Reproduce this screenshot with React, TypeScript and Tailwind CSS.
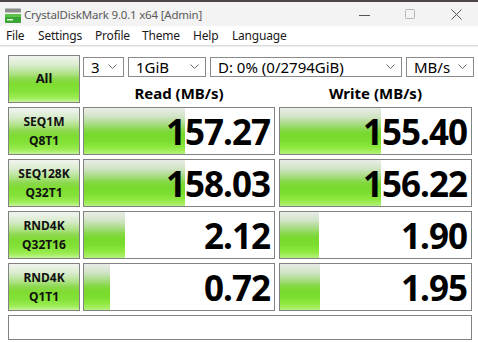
import React from "react";

const barGrad =
  "linear-gradient(to bottom, #e9ece7 0%, #d2e4c8 18%, #a9dc84 35%, #84d944 48%, #78d92c 58%, #7bde2f 72%, #8fe83f 86%, #b4f27c 100%)";
const labelGrad =
  "linear-gradient(to bottom, #f1f4ef 0%, #d9ecce 20%, #b0e288 38%, #8ad94c 50%, #7fdc30 62%, #86e33a 78%, #9bec52 90%, #c3f496 100%)";

function Chevron() {
  return (
    <svg width="9" height="6" viewBox="0 0 9 6" className="shrink-0">
      <polyline points="0.5,0.5 4.5,4.5 8.5,0.5" fill="none" stroke="#6b6b6b" strokeWidth="1" />
    </svg>
  );
}

function Combo({ text, w }: { text: string; w: string }) {
  return (
    <div className={`${w} h-[20px] border border-[#8a8a8a] bg-white flex items-center justify-between pl-[7px] pr-[6px]`}>
      <span className="text-[15px] leading-none text-black">{text}</span>
      <Chevron />
    </div>
  );
}

function LabelBox({ l1, l2 }: { l1: string; l2: string }) {
  return (
    <div
      className="w-[72px] h-[48px] border border-[#828282] flex flex-col items-center justify-center font-bold text-[12px] leading-[19px] text-[#111]"
      style={{ background: labelGrad }}
    >
      <span>{l1}</span>
      <span>{l2}</span>
    </div>
  );
}

function ValueBox({ value, bar, w }: { value: string; bar: number; w: string }) {
  return (
    <div className={`${w} h-[48px] border border-[#828282] bg-white relative overflow-hidden`}>
      <div className="absolute left-0 top-0 bottom-0" style={{ width: bar, background: barGrad }} />
      <div className="relative h-full flex items-center justify-end pr-[4px] text-[35px] font-bold leading-none text-black tracking-[-1px]">
        {value}
      </div>
    </div>
  );
}

const rows = [
  { l1: "SEQ1M", l2: "Q8T1", r: "157.27", rb: 101, w: "155.40", wb: 101 },
  { l1: "SEQ128K", l2: "Q32T1", r: "158.03", rb: 101, w: "156.22", wb: 101 },
  { l1: "RND4K", l2: "Q32T16", r: "2.12", rb: 41, w: "1.90", wb: 39 },
  { l1: "RND4K", l2: "Q1T1", r: "0.72", rb: 26, w: "1.95", wb: 40 },
];

const menu = [
  { t: "File", w: "w-[32px]" },
  { t: "Settings", w: "w-[57px]" },
  { t: "Profile", w: "w-[47px]" },
  { t: "Theme", w: "w-[51px]" },
  { t: "Help", w: "w-[39px]" },
  { t: "Language", w: "w-[60px]" },
];

export default function App() {
  return (
    <div
      className="w-[478px] h-[342px] bg-white overflow-hidden flex flex-col"
      style={{ fontFamily: '"Noto Sans", "Open Sans", sans-serif' }}
    >
      <div className="h-[2px] bg-[#4d4444] shrink-0" />
      {/* Title bar */}
      <div className="h-[24px] bg-[#f3f3f3] flex items-center shrink-0">
        <svg width="18" height="16" viewBox="0 0 18 16" className="ml-[4px] mt-[4px]">
          <rect x="1" y="0.5" width="16" height="4" rx="1" fill="#8c8c8c" />
          <rect x="1" y="6" width="16" height="9" rx="1" fill="#3aa536" />
          <rect x="1" y="6" width="16" height="3" fill="#5cc24a" />
          <rect x="3" y="11" width="6" height="1.5" fill="#dff5d8" />
        </svg>
        <span className="ml-[2px] mt-[2px] text-[11.5px] tracking-[-0.2px] text-[#5a5a5a]">CrystalDiskMark 9.0.1 x64 [Admin]</span>
        <div className="ml-auto flex items-center mt-[1px]">
          <svg width="11" height="10" viewBox="0 0 11 10" className="mr-[35px]">
            <line x1="0" y1="5.5" x2="11" y2="5.5" stroke="#555" strokeWidth="1" />
          </svg>
          <svg width="11" height="11" viewBox="0 0 11 11" className="mr-[35px]">
            <rect x="0.5" y="0.5" width="9" height="9" rx="1" fill="none" stroke="#b8b8b8" strokeWidth="1" />
          </svg>
          <svg width="11" height="11" viewBox="0 0 11 11" className="mr-[16px]">
            <line x1="0.5" y1="0.5" x2="10.5" y2="10.5" stroke="#555" strokeWidth="1" />
            <line x1="10.5" y1="0.5" x2="0.5" y2="10.5" stroke="#555" strokeWidth="1" />
          </svg>
        </div>
      </div>
      {/* Menu bar */}
      <div className="h-[19px] bg-white flex items-center pl-[6px] text-[12px] tracking-[-0.2px] text-[#1a1a1a] shrink-0">
        {menu.map((m) => (
          <span key={m.t} className={m.w}>
            {m.t}
          </span>
        ))}
      </div>
      <div className="h-[1px] bg-[#dadada] shrink-0" />
      <div className="h-[1px] bg-[#f0f0f0] shrink-0" />

      {/* Body */}
      <div className="pl-[8px] pt-[8px] flex flex-col">
        <div className="flex">
          <div
            className="w-[72px] h-[48px] border border-[#828282] flex items-center justify-center font-bold text-[13px] text-[#111]"
            style={{ background: labelGrad }}
          >
            All
          </div>
          <div className="flex flex-col ml-[3px]">
            <div className="flex gap-[4px] mt-[2px]">
              <Combo text="3" w="w-[41px]" />
              <Combo text="1GiB" w="w-[78px]" />
              <Combo text="D: 0% (0/2794GiB)" w="w-[192px]" />
              <Combo text="MB/s" w="w-[68px]" />
            </div>
            <div className="flex mt-[6px] text-[15px] font-bold text-black leading-[20px]">
              <div className="w-[192px] text-center">Read (MB/s)</div>
              <div className="w-[193px] ml-[4px] text-center">Write (MB/s)</div>
            </div>
          </div>
        </div>
        <div className="flex flex-col gap-[4px] mt-[4px]">
          {rows.map((r, i) => (
            <div key={i} className="flex">
              <LabelBox l1={r.l1} l2={r.l2} />
              <div className="ml-[3px]">
                <ValueBox value={r.r} bar={r.rb} w="w-[192px]" />
              </div>
              <div className="ml-[4px]">
                <ValueBox value={r.w} bar={r.wb} w="w-[193px]" />
              </div>
            </div>
          ))}
        </div>
        <div className="w-[464px] h-[25px] border border-[#828282] bg-white mt-[4px]" />
      </div>
    </div>
  );
}
